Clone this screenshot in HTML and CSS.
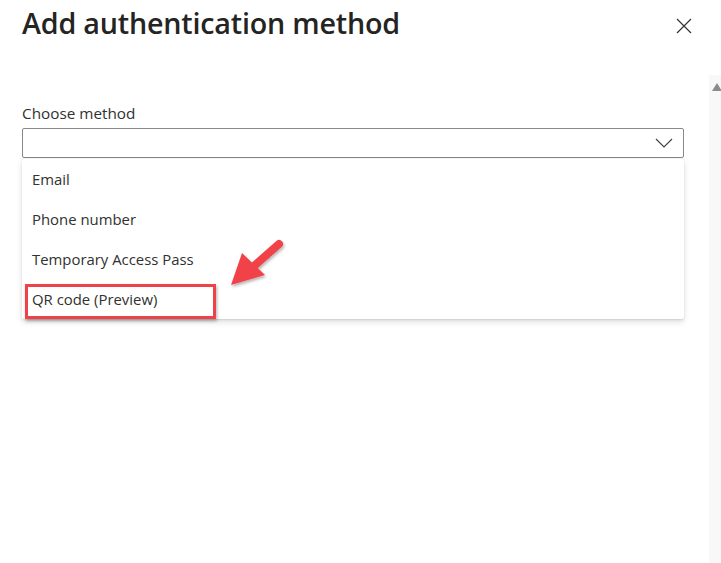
FILE: index.html
```html
<!DOCTYPE html>
<html>
<head>
<meta charset="utf-8">
<link rel="stylesheet" href="styles.css">
</head>
<body>
<div class="panel">
  <header class="header">
    <h1 class="title">Add authentication method</h1>
    <button class="close" aria-label="Close">
      <svg width="16" height="16" viewBox="0 0 16 16"><path d="M1 1 L15 15 M15 1 L1 15" stroke="#333" stroke-width="1.2" fill="none"/></svg>
    </button>
  </header>
  <div class="body">
    <div class="field">
      <label class="label">Choose method</label>
      <div class="select">
        <svg class="chev" width="18" height="10" viewBox="0 0 18 10"><path d="M1 1 L9 9 L17 1" stroke="#444" stroke-width="1.2" fill="none"/></svg>
      </div>
      <ul class="menu">
        <li class="item">Email</li>
        <li class="item">Phone number</li>
        <li class="item">Temporary Access Pass</li>
        <li class="item">QR code (Preview)</li>
      </ul>
      <div class="highlight"></div>
      <svg class="arrow" width="80" height="70" viewBox="220 230 80 70">
        <g filter="url(#sh)">
          <line x1="279" y1="244" x2="254" y2="266" stroke="#f2434a" stroke-width="8" stroke-linecap="round"/>
          <polygon points="231,285 242,253 265,275" fill="#f2434a"/>
        </g>
        <defs>
          <filter id="sh" x="-20%" y="-20%" width="150%" height="150%">
            <feDropShadow dx="1" dy="2" stdDeviation="1.5" flood-color="#000" flood-opacity="0.3"/>
          </filter>
        </defs>
      </svg>
    </div>
  </div>
  <div class="scrollbar"><span class="up"></span></div>
</div>
</body>
</html>
```
FILE: styles.css
```css
* { box-sizing: border-box; }
html, body { margin: 0; padding: 0; background: #fff; }
body {
  font-family: "Segoe UI", "Open Sans", "Noto Sans", sans-serif;
  color: #323130;
  width: 721px;
  height: 563px;
  overflow: hidden;
}
.panel { position: relative; width: 721px; height: 563px; }
.header {
  display: flex;
  justify-content: space-between;
  align-items: flex-start;
  padding: 0 29px 0 22px;
}
.title {
  margin: 3px 0 0;
  font-size: 28.7px;
  font-weight: 600;
  line-height: 40px;
  color: #252423;
  letter-spacing: -0.2px;
}
.close {
  margin-top: 18px;
  border: 0;
  background: none;
  padding: 0;
  width: 16px;
  height: 16px;
  display: flex;
}
.body { padding: 60px 37px 0 22px; }
.field { position: relative; width: 662px; }
.label {
  display: block;
  font-size: 15.3px;
  line-height: 20px;
  color: #323130;
  margin-bottom: 5px;
}
.select {
  height: 30px;
  border: 1px solid #8a8886;
  border-radius: 2px;
  display: flex;
  align-items: center;
  justify-content: flex-end;
  padding-right: 10px;
}
.menu {
  list-style: none;
  margin: 1px 0 0;
  padding: 0;
  background: #fff;
  border-radius: 2px;
  box-shadow: 0 3px 6px rgba(0,0,0,0.13), 0 0.5px 2px rgba(0,0,0,0.1);
}
.item {
  height: 40px;
  line-height: 40px;
  padding-left: 10px;
  font-size: 14.9px;
  color: #323130;
}
.highlight {
  position: absolute;
  left: 3px;
  top: 181px;
  width: 191px;
  height: 35px;
  border: 3px solid #ef4148;
  box-shadow: 1px 2px 3px rgba(0,0,0,0.3);
}
.arrow {
  position: absolute;
  left: 198px;
  top: 127px;
}
.scrollbar {
  position: absolute;
  left: 709px;
  top: 75px;
  width: 12px;
  height: 488px;
  background: #f8f8f8;
}
.up {
  position: absolute;
  left: 3px;
  top: 8px;
  width: 0; height: 0;
  border-left: 5px solid transparent;
  border-right: 5px solid transparent;
  border-bottom: 8px solid #8b8b8b;
}
```
